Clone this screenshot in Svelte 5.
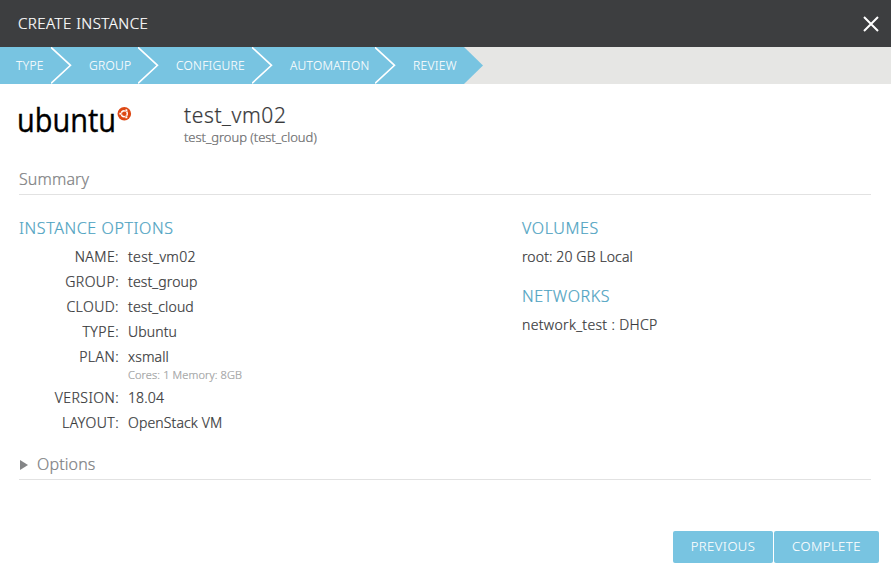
<script>
  const steps = [
    { label: 'TYPE', width: 51 },
    { label: 'GROUP', width: 87 },
    { label: 'CONFIGURE', width: 114 },
    { label: 'AUTOMATION', width: 123 },
    { label: 'REVIEW', width: 89 }
  ];
  const rows = [
    { label: 'NAME:', value: 'test_vm02' },
    { label: 'GROUP:', value: 'test_group' },
    { label: 'CLOUD:', value: 'test_cloud' },
    { label: 'TYPE:', value: 'Ubuntu' },
    { label: 'PLAN:', value: 'xsmall', note: 'Cores: 1 Memory: 8GB' },
    { label: 'VERSION:', value: '18.04' },
    { label: 'LAYOUT:', value: 'OpenStack VM' }
  ];
</script>

<div class="modal">
  <header>
    <h1>CREATE INSTANCE</h1>
    <svg class="close" width="16" height="16" viewBox="0 0 16 16"><path d="M1 1L15 15M15 1L1 15" stroke="#fff" stroke-width="2" fill="none" /></svg>
  </header>

  <nav>
    {#each steps as step, i}
      <div class="step" style:width="{step.width}px">
        <span>{step.label}</span>
        {#if i < steps.length - 1}
          <svg class="arrow" width="22" height="37" viewBox="0 0 22 37"><path d="M0 0.3L19.5 18.3L0 36.3" fill="none" stroke="#fff" stroke-width="1.6" /></svg>
        {:else}
          <svg class="arrow" width="22" height="37" viewBox="0 0 22 37"><path d="M0 0L19 18.5L0 37Z" fill="#78c4e1" /></svg>
        {/if}
      </div>
    {/each}
  </nav>

  <main>
    <section class="intro">
      <svg class="logo" width="114" height="30" viewBox="0 0 114 30">
        <text x="-2" y="26.5" textLength="99" lengthAdjust="spacingAndGlyphs">ubuntu</text>
        <circle cx="105.3" cy="8.7" r="6.8" fill="#dd4814" />
        <circle cx="105.3" cy="8.7" r="3" fill="none" stroke="#fff" stroke-width="1.4" />
        <g fill="#fff" stroke="#dd4814" stroke-width=".5">
          <circle cx="101.3" cy="8.7" r="1.3" />
          <circle cx="107.3" cy="5.2" r="1.3" />
          <circle cx="107.3" cy="12.2" r="1.3" />
        </g>
      </svg>
      <div>
        <h2>test_vm02</h2>
        <p class="sub">test_group (test_cloud)</p>
      </div>
    </section>

    <h3 class="summary">Summary</h3>

    <div class="columns">
      <section>
        <h4>INSTANCE OPTIONS</h4>
        <dl>
          {#each rows as row}
            <dt>{row.label}</dt>
            <dd>{row.value}{#if row.note}<small>{row.note}</small>{/if}</dd>
          {/each}
        </dl>
      </section>
      <section>
        <h4>VOLUMES</h4>
        <p>root: 20 GB Local</p>
        <h4 class="net">NETWORKS</h4>
        <p class="network">network_test : DHCP</p>
      </section>
    </div>

    <h3 class="options">
      <svg width="8" height="10" viewBox="0 0 8 10"><path d="M0 0L8 5L0 10Z" fill="#848587" /></svg>
      <span>Options</span>
    </h3>
  </main>

  <footer>
    <button class="prev">PREVIOUS</button>
    <button class="done">COMPLETE</button>
  </footer>
</div>

<style>
  .modal {
    position: relative;
    display: flex;
    flex-direction: column;
    height: 575px;
    overflow: hidden;
    background: #fff;
    color: #38393b;
    font: 300 14px/25px 'Noto Sans', 'Open Sans', sans-serif;
    letter-spacing: .13px;
    -webkit-text-stroke: .22px currentColor;
  }
  h1, h2, h3, h4, p, dl, dd { margin: 0; font-weight: inherit; }
  header {
    display: flex;
    align-items: center;
    justify-content: space-between;
    height: 47px;
    padding: 0 12px 0 18px;
    box-sizing: border-box;
    background: #3d3e40;
    color: #fff;
  }
  h1 { font-size: 15px; letter-spacing: .47px; }
  nav { display: flex; height: 37px; background: #e6e6e4; }
  .step {
    position: relative;
    box-sizing: border-box;
    padding-left: 38px;
    background: #78c4e1;
    color: #fff;
    font-size: 12px;
    line-height: 38px;
    letter-spacing: .32px;
    white-space: nowrap;
    -webkit-text-stroke-width: .1px;
  }
  .step:first-child { padding-left: 16px; }
  .arrow { position: absolute; z-index: 1; left: 100%; top: 0; }
  main { flex: 1; padding: 0 20px 0 19px; }
  .intro { display: flex; height: 83px; }
  .logo { margin-top: 21px; flex: none; margin-right: 51px; overflow: visible; }
  .logo text {
    font: 400 32px 'Open Sans', sans-serif;
    letter-spacing: 0;
    fill: #000;
    stroke: #000;
    stroke-width: .4px;
  }
  h2 { margin-top: 16px; font-size: 21px; line-height: 30px; letter-spacing: .6px; }
  .sub { font-size: 13px; line-height: 14px; letter-spacing: -.05px; color: #6b6c6e; }
  h3 {
    height: 27px;
    border-bottom: 1px solid #e2e2e2;
    font-size: 16px;
    line-height: 24px;
    color: #808183;
  }
  .columns { display: grid; grid-template-columns: 503px 1fr; height: 257px; padding-top: 21px; box-sizing: border-box; }
  h4 { font-size: 16px; line-height: 25px; letter-spacing: .6px; margin-bottom: 3px; color: #4fa3c2; }
  h4.net { margin-top: 15px; }
  .network { letter-spacing: .33px; }
  dl { display: grid; grid-template-columns: 100px 1fr; column-gap: 9px; }
  dt { text-align: right; letter-spacing: .45px; }
  dd:first-of-type { letter-spacing: .35px; }
  small { display: block; height: 16px; font-size: 11px; line-height: 11px; color: #a2a3a4; }
  .options { display: flex; align-items: center; gap: 9px; padding-left: 1px; }
  .options svg { margin-top: -2px; }
  .options span { margin-top: -3px; }
  footer { display: flex; justify-content: flex-end; gap: 1px; padding: 0 12px 12px 0; }
  button {
    height: 32px;
    padding: 0 0 2px;
    border: 0;
    border-radius: 2px;
    background: #78c4e1;
    color: #fff;
    font: inherit;
    font-size: 13px;
    letter-spacing: .5px;
    -webkit-text-stroke-width: .1px;
  }
  .prev { width: 100px; }
  .done { width: 105px; }
</style>
